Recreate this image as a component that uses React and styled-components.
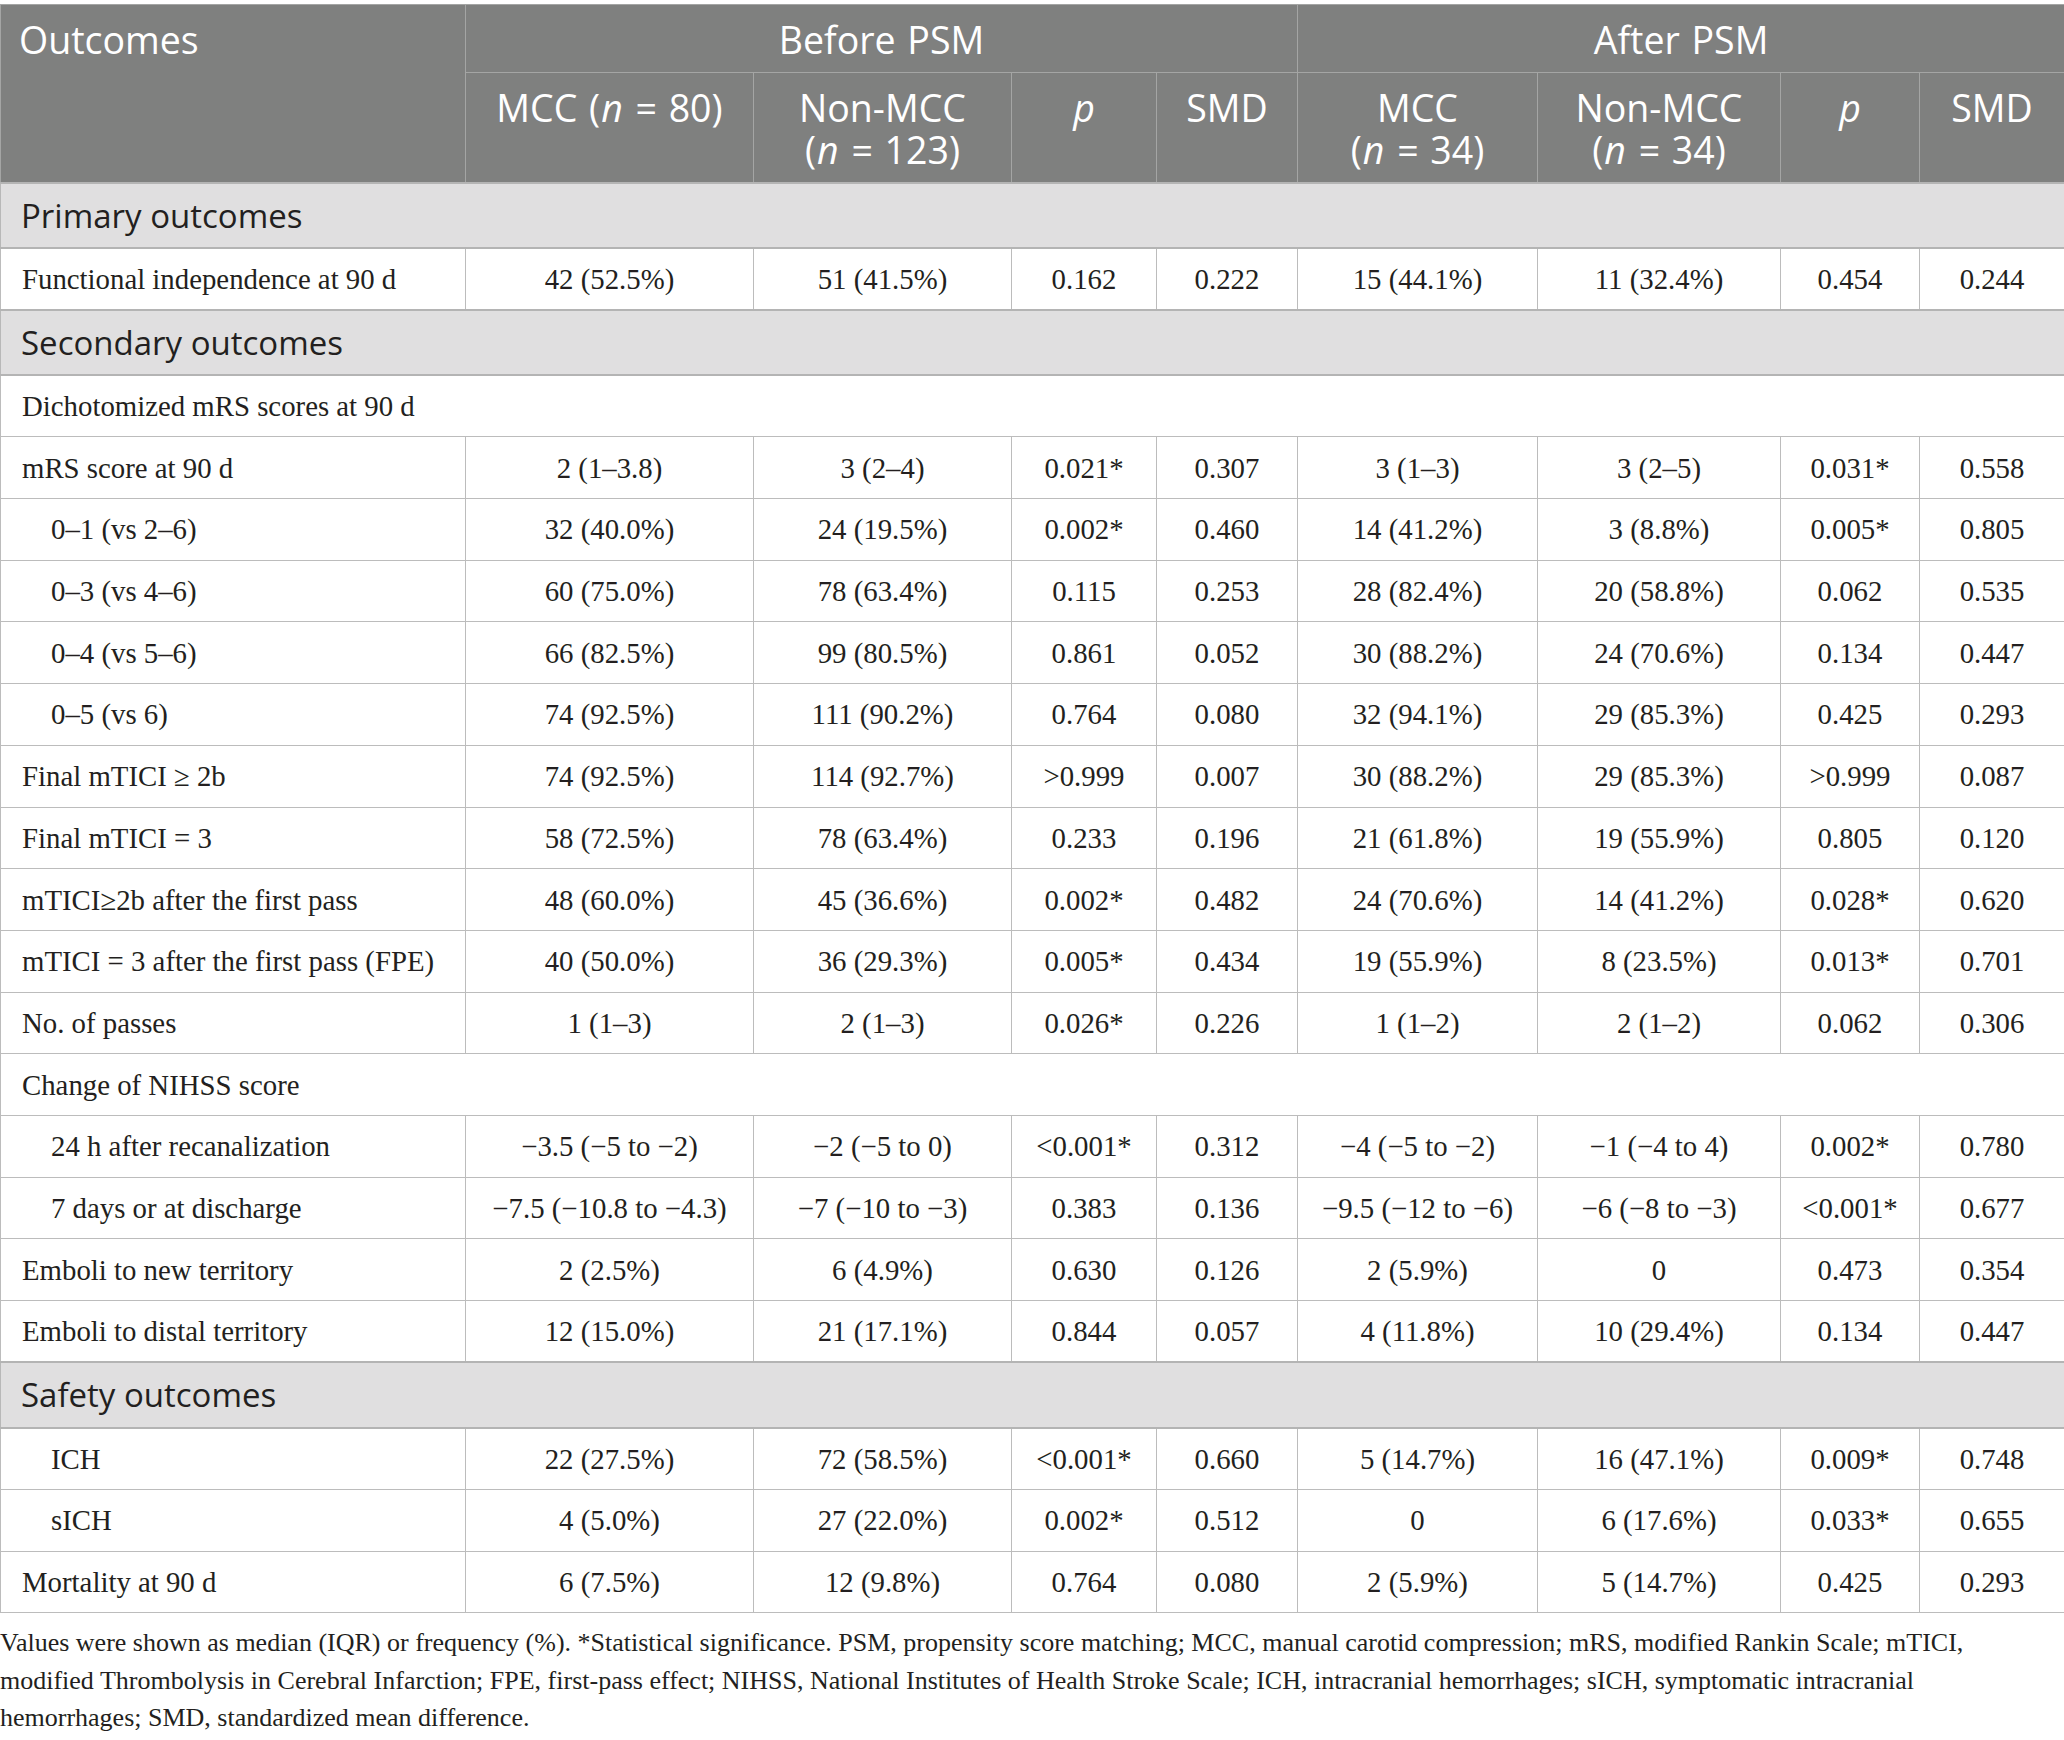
import React from 'react';
import styled, { createGlobalStyle } from 'styled-components';

const GlobalStyle = createGlobalStyle`
  html, body {
    margin: 0;
    padding: 0;
    background: #ffffff;
  }
  body {
    font-family: "Liberation Serif", "Times New Roman", serif;
    color: #231f20;
  }
`;

const Page = styled.div`
  width: 2064px;
  padding-top: 4px;
`;

const Table = styled.table`
  width: 2064px;
  table-layout: fixed;
  border-collapse: collapse;
  border: 1px solid #b8b8b8;
`;

const HeadRow = styled.tr`
  height: ${(p) => p.$h}px;
`;

const Th = styled.th`
  background: #7f807f;
  color: #ffffff;
  font-family: "Open Sans", "Noto Sans", sans-serif;
  font-weight: 400;
  font-size: 37.5px;
  line-height: 42px;
  text-align: ${(p) => (p.$left ? 'left' : 'center')};
  vertical-align: top;
  padding: 14px 18px 0;
  border: 1px solid #a4a5a4;
  word-spacing: 2px;

  em {
    font-style: italic;
    padding: 0 1px;
  }
`;

const SectionRow = styled.tr`
  height: 65.5px;
`;

const SectionCell = styled.td`
  background: #e0dfe0;
  font-family: "Open Sans", "Noto Sans", sans-serif;
  font-size: 33px;
  color: #231f20;
  padding: 0 20px;
  vertical-align: middle;
  border-top: 2px solid #b4b4b4;
  border-bottom: 2px solid #b4b4b4;
`;

const Row = styled.tr`
  height: 61.7px;
`;

const Cell = styled.td`
  font-size: 28.8px;
  line-height: 34px;
  color: #231f20;
  text-align: center;
  vertical-align: middle;
  padding: 0 12px;
  border: 1px solid #bcbcbc;
  white-space: nowrap;
`;

const LabelCell = styled(Cell)`
  text-align: left;
  padding-left: ${(p) => (p.$indent ? 50 : 21)}px;
`;

const Footnote = styled.p`
  margin: 11px 0 0;
  max-width: 2010px;
  font-size: 26px;
  line-height: 37.5px;
  color: #231f20;
`;

const widths = [465, 288, 258, 145, 141, 240, 243, 139, 145];

const sections = [
  {
    title: 'Primary outcomes',
    rows: [
      ['Functional independence at 90 d', '42 (52.5%)', '51 (41.5%)', '0.162', '0.222', '15 (44.1%)', '11 (32.4%)', '0.454', '0.244'],
    ],
  },
  {
    title: 'Secondary outcomes',
    rows: [
      { span: 'Dichotomized mRS scores at 90 d' },
      ['mRS score at 90 d', '2 (1–3.8)', '3 (2–4)', '0.021*', '0.307', '3 (1–3)', '3 (2–5)', '0.031*', '0.558'],
      { indent: true, cells: ['0–1 (vs 2–6)', '32 (40.0%)', '24 (19.5%)', '0.002*', '0.460', '14 (41.2%)', '3 (8.8%)', '0.005*', '0.805'] },
      { indent: true, cells: ['0–3 (vs 4–6)', '60 (75.0%)', '78 (63.4%)', '0.115', '0.253', '28 (82.4%)', '20 (58.8%)', '0.062', '0.535'] },
      { indent: true, cells: ['0–4 (vs 5–6)', '66 (82.5%)', '99 (80.5%)', '0.861', '0.052', '30 (88.2%)', '24 (70.6%)', '0.134', '0.447'] },
      { indent: true, cells: ['0–5 (vs 6)', '74 (92.5%)', '111 (90.2%)', '0.764', '0.080', '32 (94.1%)', '29 (85.3%)', '0.425', '0.293'] },
      ['Final mTICI ≥ 2b', '74 (92.5%)', '114 (92.7%)', '>0.999', '0.007', '30 (88.2%)', '29 (85.3%)', '>0.999', '0.087'],
      ['Final mTICI = 3', '58 (72.5%)', '78 (63.4%)', '0.233', '0.196', '21 (61.8%)', '19 (55.9%)', '0.805', '0.120'],
      ['mTICI≥2b after the first pass', '48 (60.0%)', '45 (36.6%)', '0.002*', '0.482', '24 (70.6%)', '14 (41.2%)', '0.028*', '0.620'],
      ['mTICI = 3 after the first pass (FPE)', '40 (50.0%)', '36 (29.3%)', '0.005*', '0.434', '19 (55.9%)', '8 (23.5%)', '0.013*', '0.701'],
      ['No. of passes', '1 (1–3)', '2 (1–3)', '0.026*', '0.226', '1 (1–2)', '2 (1–2)', '0.062', '0.306'],
      { span: 'Change of NIHSS score' },
      { indent: true, cells: ['24 h after recanalization', '−3.5 (−5 to −2)', '−2 (−5 to 0)', '<0.001*', '0.312', '−4 (−5 to −2)', '−1 (−4 to 4)', '0.002*', '0.780'] },
      { indent: true, cells: ['7 days or at discharge', '−7.5 (−10.8 to −4.3)', '−7 (−10 to −3)', '0.383', '0.136', '−9.5 (−12 to −6)', '−6 (−8 to −3)', '<0.001*', '0.677'] },
      ['Emboli to new territory', '2 (2.5%)', '6 (4.9%)', '0.630', '0.126', '2 (5.9%)', '0', '0.473', '0.354'],
      ['Emboli to distal territory', '12 (15.0%)', '21 (17.1%)', '0.844', '0.057', '4 (11.8%)', '10 (29.4%)', '0.134', '0.447'],
    ],
  },
  {
    title: 'Safety outcomes',
    rows: [
      { indent: true, cells: ['ICH', '22 (27.5%)', '72 (58.5%)', '<0.001*', '0.660', '5 (14.7%)', '16 (47.1%)', '0.009*', '0.748'] },
      { indent: true, cells: ['sICH', '4 (5.0%)', '27 (22.0%)', '0.002*', '0.512', '0', '6 (17.6%)', '0.033*', '0.655'] },
      ['Mortality at 90 d', '6 (7.5%)', '12 (9.8%)', '0.764', '0.080', '2 (5.9%)', '5 (14.7%)', '0.425', '0.293'],
    ],
  },
];

function DataRow({ row }) {
  if (row.span) {
    return (
      <Row>
        <LabelCell colSpan={9}>{row.span}</LabelCell>
      </Row>
    );
  }
  const cells = Array.isArray(row) ? row : row.cells;
  const [label, ...values] = cells;
  return (
    <Row>
      <LabelCell $indent={row.indent}>{label}</LabelCell>
      {values.map((v, i) => (
        <Cell key={i}>{v}</Cell>
      ))}
    </Row>
  );
}

export default function App() {
  return (
    <Page>
      <GlobalStyle />
      <Table>
        <colgroup>
          {widths.map((w, i) => (
            <col key={i} style={{ width: w }} />
          ))}
        </colgroup>
        <thead>
          <HeadRow $h={68}>
            <Th $left rowSpan={2}>Outcomes</Th>
            <Th colSpan={4}>Before PSM</Th>
            <Th colSpan={4}>After PSM</Th>
          </HeadRow>
          <HeadRow $h={110}>
            <Th>
              MCC (<em>n</em> = 80)
            </Th>
            <Th>
              Non-MCC
              <br />(<em>n</em> = 123)
            </Th>
            <Th>
              <em>p</em>
            </Th>
            <Th>SMD</Th>
            <Th>
              MCC
              <br />(<em>n</em> = 34)
            </Th>
            <Th>
              Non-MCC
              <br />(<em>n</em> = 34)
            </Th>
            <Th>
              <em>p</em>
            </Th>
            <Th>SMD</Th>
          </HeadRow>
        </thead>
        <tbody>
          {sections.map((s) => (
            <React.Fragment key={s.title}>
              <SectionRow>
                <SectionCell colSpan={9}>{s.title}</SectionCell>
              </SectionRow>
              {s.rows.map((r, i) => (
                <DataRow key={i} row={r} />
              ))}
            </React.Fragment>
          ))}
        </tbody>
      </Table>
      <Footnote>
        Values were shown as median (IQR) or frequency (%). *Statistical significance. PSM, propensity score
        matching; MCC, manual carotid compression; mRS, modified Rankin Scale; mTICI, modified Thrombolysis in
        Cerebral Infarction; FPE, first-pass effect; NIHSS, National Institutes of Health Stroke Scale; ICH,
        intracranial hemorrhages; sICH, symptomatic intracranial hemorrhages; SMD, standardized mean difference.
      </Footnote>
    </Page>
  );
}
